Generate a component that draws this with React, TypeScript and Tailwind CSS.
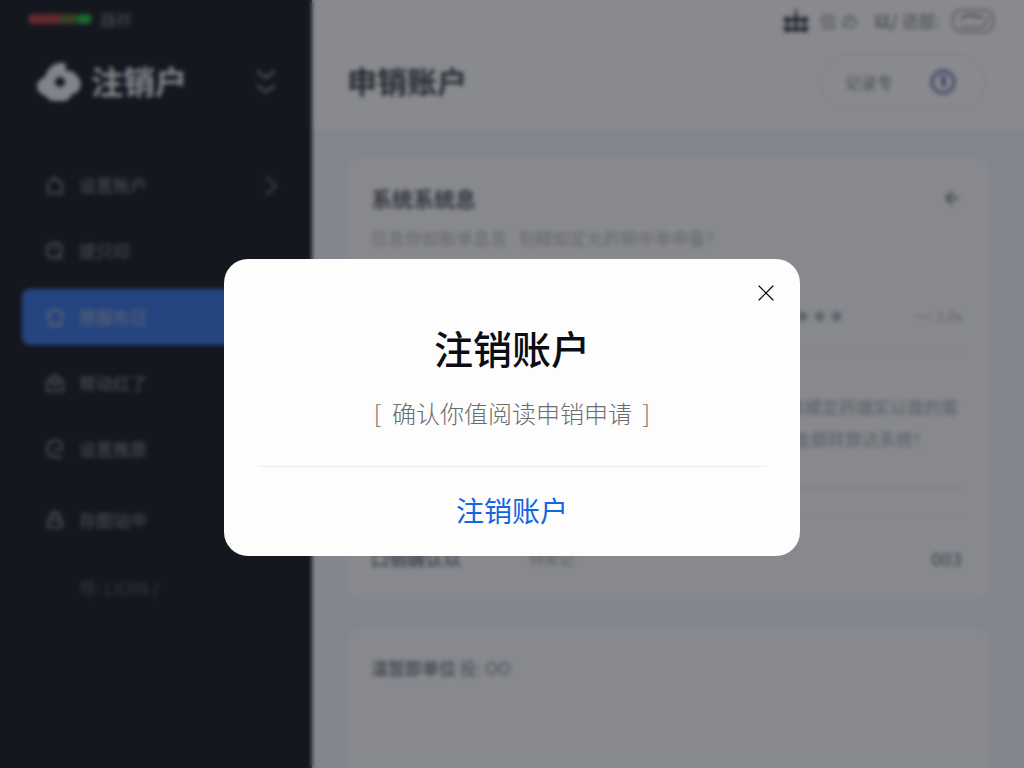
import { useState } from "react";
import { ArrowLeft, X } from "lucide-react";

const iconPaths = {
  home: "M3 9L7 5L9 2L12 6H15L17 9V18H3Z",
  chat: "M14 17H6C3 16 2 13 2 10C2 5 5 2 10 2C15 2 17 5 17 9C17 12 15 14 12 13M18 18L14 15M7 8L12 6",
  shirt: "M6 9H2L5 4H8L10 2L12 4H15L18 8L16 10V18H5V9",
  bag: "M2 8H18V18H2ZM5 8V5L10 2L15 5V8M6 12H14",
  round: "M17 18H10C5 18 2 15 2 10C2 5 5 2 10 2C15 2 18 5 17 8C17 11 13 12 8 11",
  lock: "M3 17V10H17V17ZM5 10L6 4H14L15 10M8 2H12",
};

const mainLinks = [
  { name: "设置账户", icon: iconPaths.home, current: false, more: true },
  { name: "提只印", icon: iconPaths.chat, current: false, more: false },
  { name: "限服布日", icon: iconPaths.shirt, current: true, more: false },
  { name: "帮动红了", icon: iconPaths.bag, current: false, more: false },
  { name: "设置推原", icon: iconPaths.round, current: false, more: false },
];

const NavIcon = ({ path }: { path: string }) => (
  <svg
    width="20"
    height="20"
    viewBox="0 0 20 20"
    fill="none"
    stroke="currentColor"
    strokeWidth="2.4"
    strokeLinejoin="round"
    aria-hidden="true"
  >
    <path d={path} />
  </svg>
);

const Logo = () => (
  <svg width="44" height="40" viewBox="0 0 44 40" fill="#f0f1f4" aria-hidden="true">
    <path
      fillRule="evenodd"
      d="M22 1C26 0 30 1 29 5L28 9C33 8 38 10 40 14C45 18 45 27 40 30C38 32 36 32 34 33C33 37 30 39 26 39L17 39C13 39 11 37 9 34C4 33 0 29 0 24C0 20 3 17 8 15C10 8 15 2 22 1ZM23 15A5 5 0 1 0 23 25A5 5 0 1 0 23 15Z"
    />
  </svg>
);

const Sidebar = () => (
  <aside className="w-[312px] shrink-0 bg-[#161820] text-[#74747d]">
    <div className="flex h-[38px] items-center pl-7 text-base">
      <span className="h-[10px] w-8 rounded-l-full bg-[#b53c40]" />
      <span className="h-[10px] w-4 bg-[#65682c]" />
      <span className="h-[10px] w-4 rounded-full bg-[#1fb83c]" />
      <span className="ml-2">器样</span>
    </div>
    <div className="mt-5 flex h-12 items-center pr-9 pl-[37px]">
      <Logo />
      <span className="ml-[10px] pb-1 text-[32px] leading-[44px] font-bold text-[#f0f1f4]">注销户</span>
      <button type="button" aria-label="展开" className="ml-auto text-[#8a8c95]">
        <svg width="20" height="28" viewBox="0 0 20 28" fill="none" stroke="currentColor" strokeWidth="2.4" aria-hidden="true">
          <path d="M1 3L10 10L19 3M1 17L10 24L19 17" />
        </svg>
      </button>
    </div>
    <nav className="mt-[51px] flex flex-col gap-[10px] pr-6 pl-[22px] text-[17px]">
      {mainLinks.map((item) => (
        <a
          key={item.name}
          href="#"
          className={
            item.current
              ? "flex h-14 items-center gap-[14px] rounded-lg bg-[#3774e2] pr-2 pl-[23px] font-medium text-[#96a5c8]"
              : "flex h-14 items-center gap-[14px] rounded-lg pr-2 pl-[23px] font-medium"
          }
        >
          <NavIcon path={item.icon} />
          <span>{item.name}</span>
          {item.more && (
            <svg className="ml-auto" width="16" height="20" viewBox="0 0 16 20" fill="none" stroke="currentColor" strokeWidth="2" aria-hidden="true">
              <path d="M2 2L12 11L2 20" />
            </svg>
          )}
        </a>
      ))}
    </nav>
    <nav className="mt-[15px] flex flex-col gap-3 pr-6 pl-[22px] text-[17px]">
      <a href="#" className="flex h-14 items-center gap-[14px] pl-[23px] font-medium">
        <NavIcon path={iconPaths.lock} />
        <span>存图站中</span>
      </a>
      <a href="#" className="flex h-14 items-center pl-[57px] text-[#55555e]">
        导: LIOIN /
      </a>
    </nav>
  </aside>
);

const Header = () => (
  <header className="bg-[#fdfeff] pr-[38px] pb-5 pl-[35px]">
    <div className="-mr-2 flex h-[42px] items-center justify-end text-[17px] text-[#85878d]">
      <svg width="24" height="24" viewBox="0 0 24 24" fill="#3c3f48" aria-hidden="true">
        <path d="M11 0h2v7h-2zM0 8h7v6H0zM9 7h6v7H9zM17 8h7v6h-7zM0 17h7v6H0zM9 17h6v6H9zM17 17h7v6h-7z" />
        <path d="M2 10h20v2H2zM2 19h20v2H2zM3 12h1v6H3zM11 12h2v6h-2zM20 12h1v6h-1z" />
      </svg>
      <span className="ml-3">信 の</span>
      <span className="ml-4 font-bold">以/</span>
      <span className="ml-1">语部:</span>
      <svg className="ml-3" width="42" height="26" viewBox="0 0 42 26" fill="none" stroke="#a0a2a8" strokeWidth="2" aria-hidden="true">
        <rect x="1" y="2" width="40" height="22" rx="8" />
        <path d="M35 8C36 13 35 18 29 19H8" />
        <path d="M9 11C14 6 21 7 26 9H31" stroke="#6c6f76" />
      </svg>
    </div>
    <div className="mt-3 flex h-14 items-center justify-between">
      <h1 className="pb-1 text-3xl leading-10 font-bold text-[#3a3d49]">申销账户</h1>
      <div className="flex h-14 items-center gap-9 rounded-full border border-[#e6e8ee] pr-7 pl-6 text-base text-[#85878d]">
        <span>记录专</span>
        <button type="button" aria-label="余额" className="text-[#6b7bb2]">
          <svg width="28" height="28" viewBox="0 0 28 28" fill="none" stroke="currentColor" aria-hidden="true">
            <circle cx="14" cy="14" r="11" strokeWidth="3" />
            <path d="M10 9H16V19M14 9V19M11 14H17" strokeWidth="2" />
          </svg>
        </button>
      </div>
    </div>
  </header>
);

const Content = () => (
  <main className="flex flex-1 flex-col gap-7 pt-7 pr-[34px] pl-[35px]">
    <section className="rounded-2xl bg-[#fbfdff] px-6 pt-[26px] pb-7 text-[17px]">
      <div className="flex h-7 items-center justify-between pr-1">
        <h2 className="text-[21px] leading-7 font-bold text-[#5b5e67]">系统系统息</h2>
        <button type="button" aria-label="返回" className="text-[#85888f]">
          <ArrowLeft className="size-5" strokeWidth={3} />
        </button>
      </div>
      <p className="mt-3 h-7 leading-7 font-medium whitespace-pre text-[#c4c6cb]">
        信息你如账单息息   包精如定允的销中单申备？
      </p>
      <div className="mt-6 flex h-[78px] items-center justify-end gap-[70px] border-t border-[#f4f5f9] pr-1">
        <span className="text-[17px] font-bold text-[#8d9097]">＊＊＊</span>
        <span className="text-sm text-[#b4b6bc]">一: 3.0s</span>
      </div>
      <div className="border-t border-[#e6e8ee] pt-9 pb-8 text-right leading-8 font-medium text-[#b4b6bc]">
        <p className="pr-2">请确认已阅读模定药端实以我的需</p>
        <p className="pr-9">并同意您金额转算达系统！</p>
      </div>
      <div className="border-t-2 border-[#e9ebf0]" />
      <div className="mt-7 flex items-center border-t border-[#f2f4f8] pt-[26px] leading-7">
        <span className="w-[158px] text-lg font-bold text-[#85888f]">口销确认以</span>
        <span className="text-[15px] text-[#a4a6ac]">待处记</span>
        <span className="ml-auto pr-1 text-lg font-medium text-[#85888f]">003</span>
      </div>
    </section>
    <section className="flex-1 rounded-t-2xl bg-[#fbfdff] px-6 pt-[26px]">
      <h2 className="text-[17px] leading-7 text-[#85888f]">
        <span className="font-bold">温暂即单位</span> 投: OO
      </h2>
    </section>
  </main>
);

type DialogProps = {
  onClose: () => void;
};

const ConfirmDialog = ({ onClose }: DialogProps) => (
  <div className="fixed inset-0 grid place-items-center bg-[#13161e]/50 px-6 pt-[47px] backdrop-blur-[2px]">
    <div
      role="dialog"
      aria-modal="true"
      aria-labelledby="dialog-title"
      className="relative w-full max-w-xl rounded-3xl bg-[#fdfdfd] px-[34px] pt-16 text-center"
    >
      <button
        type="button"
        onClick={onClose}
        aria-label="关闭"
        className="absolute top-5 right-5 grid size-7 place-items-center text-black"
      >
        <X className="mr-1 size-7" strokeWidth={1} />
      </button>
      <h2 id="dialog-title" className="text-[39px] leading-[48px] font-medium text-[#0b0d14]">
        注销账户
      </h2>
      <p className="mt-[26px] text-2xl leading-8 font-light whitespace-pre text-[#6c6c6c]">
        [  确认你值阅读申销申请  ]
      </p>
      <button
        type="button"
        onClick={onClose}
        className="mt-[37px] h-[90px] w-full border-t border-[#ececec] pb-1 text-[28px] text-[#1565e0]"
      >
        注销账户
      </button>
    </div>
  </div>
);

const App = () => {
  const [showDialog, setShowDialog] = useState(true);
  return (
    <div className="flex min-h-screen bg-[#f2f5fb] font-['Noto_Sans_CJK_SC',sans-serif]">
      <Sidebar />
      <div className="flex min-w-0 flex-1 flex-col">
        <Header />
        <Content />
      </div>
      {showDialog && <ConfirmDialog onClose={() => setShowDialog(false)} />}
    </div>
  );
};

export default App;
